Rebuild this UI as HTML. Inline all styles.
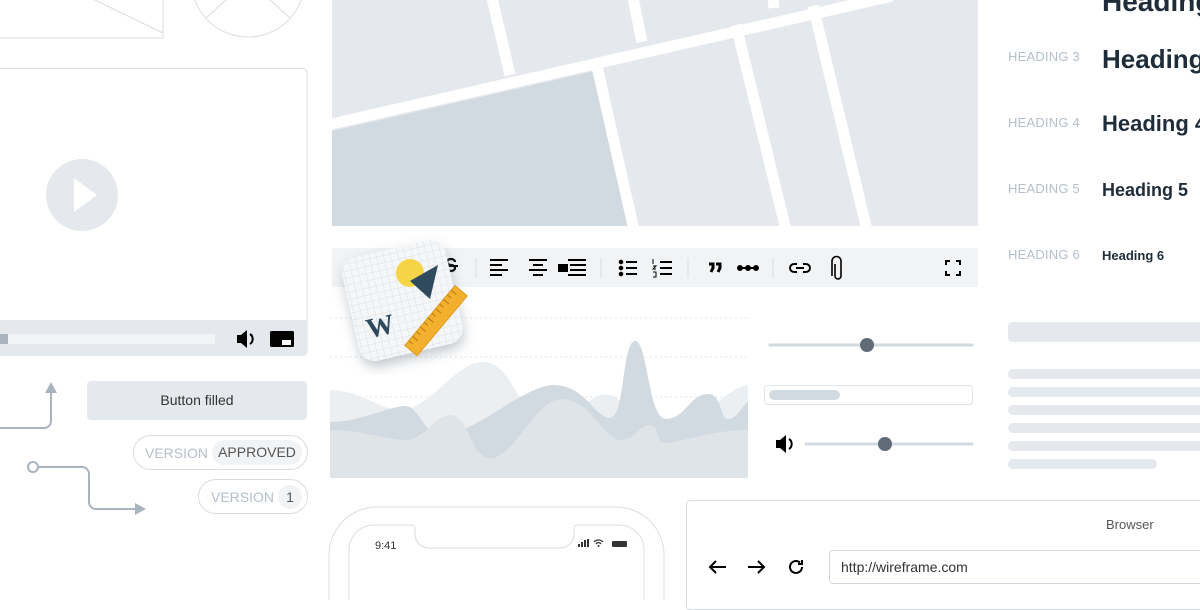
<!DOCTYPE html>
<html><head><meta charset="utf-8"><style>
*{margin:0;padding:0;box-sizing:border-box}
body{width:1200px;height:600px;overflow:hidden;background:#fff;font-family:"Liberation Sans",Arial,sans-serif;position:relative}
.a{position:absolute}
.lbl{position:absolute;left:1008px;font-size:13px;color:#b5bfca;letter-spacing:0.2px}
.h{position:absolute;left:1102px;font-weight:bold;color:#1f2d3a;white-space:nowrap}
.ln{position:absolute;left:1008px;width:200px;height:10px;border-radius:5px;background:#e5e8ec}
</style></head><body>

<svg class="a" style="left:0;top:0" width="330" height="600">
  <path d="M0 38 H163 V0" fill="none" stroke="#d8dde3" stroke-width="1"/>
  <line x1="95" y1="0" x2="163" y2="33" stroke="#d8dde3"/>
  <circle cx="248" cy="-20" r="57" fill="none" stroke="#d8dde3"/>
  <line x1="248" y1="-20" x2="206" y2="18" stroke="#d8dde3"/>
  <line x1="248" y1="-20" x2="290" y2="18" stroke="#d8dde3"/>
  <rect x="-10" y="68.5" width="317" height="287" rx="4" fill="#fff" stroke="#d8dde3"/>
  <path d="M-10 320 H307 V352 a4 4 0 0 1 -4 4 H-10Z" fill="#e5e8ec"/>
  <rect x="0" y="334" width="215" height="10" fill="#f1f3f5"/>
  <rect x="0" y="334" width="8" height="10" fill="#a9b4bf"/>
  <path d="M237 335 h4 l6 -5 v18 l-6 -5 h-4z" fill="#000"/>
  <path d="M250 334 a6 6 0 0 1 0 10" fill="none" stroke="#000" stroke-width="2"/>
  <rect x="270" y="331" width="24" height="16" rx="1.5" fill="#000"/>
  <rect x="282" y="340" width="9" height="5" fill="#fff"/>
  <circle cx="82" cy="195" r="36" fill="#e5e8ec"/>
  <path d="M74 178 L97 195 L74 212Z" fill="#fff"/>
  <path d="M0 428 H44 a7 7 0 0 0 7 -7 V392" fill="none" stroke="#a9b4bf" stroke-width="2"/>
  <path d="M45 393 L51 382 L57 393Z" fill="#a9b4bf"/>
  <circle cx="33" cy="467" r="5" fill="#fff" stroke="#a9b4bf" stroke-width="2"/>
  <path d="M38 467 H82 a7 7 0 0 1 7 7 V502 a7 7 0 0 0 7 7 H136" fill="none" stroke="#a9b4bf" stroke-width="2"/>
  <path d="M135 503 L146 509 L135 515Z" fill="#a9b4bf"/>
</svg>

<div class="a" style="left:87px;top:381px;width:220px;height:39px;background:#e5e8ec;border-radius:4px;font-size:14px;color:#333;text-align:center;line-height:39px">Button filled</div>
<div class="a" style="left:133px;top:435px;width:175px;height:35px;border:1px solid #d8dde3;border-radius:18px"></div>
<div class="a" style="left:145px;top:445px;font-size:14px;color:#b5bfca">VERSION</div>
<div class="a" style="left:212px;top:440px;width:90px;height:25px;border-radius:13px;background:#f1f3f5;font-size:14px;color:#555;text-align:center;line-height:25px">APPROVED</div>
<div class="a" style="left:198px;top:479px;width:110px;height:35px;border:1px solid #d8dde3;border-radius:18px"></div>
<div class="a" style="left:211px;top:489px;font-size:14px;color:#b5bfca">VERSION</div>
<div class="a" style="left:278px;top:485px;width:24px;height:24px;border-radius:12px;background:#f1f3f5;font-size:14px;color:#555;text-align:center;line-height:24px">1</div>

<svg class="a" style="left:332px;top:0" width="646" height="226">
  <rect width="646" height="226" fill="#e5e8ec"/>
  <path d="M0 131 L263 71 L298 226 L0 226Z" fill="#d1d9e1"/>
  <g stroke="#fff" stroke-width="11">
    <line x1="-5" y1="125" x2="560" y2="-4"/>
    <line x1="160" y1="-2" x2="178" y2="75"/>
    <line x1="301" y1="-2" x2="310" y2="42"/>
    <line x1="441" y1="-2" x2="442" y2="8"/>
    <line x1="264" y1="62" x2="302" y2="230"/>
    <line x1="404" y1="25" x2="454" y2="230"/>
    <line x1="481" y1="6" x2="535" y2="230"/>
  </g>
</svg>

<div class="a" style="left:332px;top:248px;width:646px;height:39px;background:#f1f3f5"></div>
<svg class="a" style="left:330px;top:248px" width="650" height="40" fill="none" stroke="#000" stroke-width="2">
  <path d="M125 14 a4 3 0 1 0 -4 3 a4 3 0 1 1 -4 3" stroke-width="2.2"/>
  <path d="M114 18H128" stroke-width="2"/>
  <line x1="146" y1="10" x2="146" y2="30" stroke="#ddd" stroke-width="1"/>
  <path d="M160 12h18M160 17h12M160 22h18M160 27h12"/>
  <path d="M199 12h18M203 17h10M199 22h18M203 27h10"/>
  <rect x="228" y="16" width="10" height="8" fill="#000" stroke="none"/>
  <path d="M238 12h18M240 17h16M240 22h16M238 27h18"/>
  <line x1="271" y1="10" x2="271" y2="30" stroke="#ddd" stroke-width="1"/>
  <path d="M296 14h11M296 20h11M296 26h11"/>
  <circle cx="291" cy="14" r="1.3" fill="#000"/><circle cx="291" cy="20" r="1.3" fill="#000"/><circle cx="291" cy="26" r="1.3" fill="#000"/>
  <path d="M330 14h12M330 20h12M330 26h12"/>
  <path d="M323 11v5M323 18h3l-3 3h3M323 24h3v5h-3" stroke-width="1"/>
  <line x1="358" y1="10" x2="358" y2="30" stroke="#ddd" stroke-width="1"/>
  <path d="M379 16h4v4l-2 4M386 16h4v4l-2 4" stroke-width="3"/>
  <path d="M408 20h20"/><circle cx="410" cy="20" r="2" fill="#000"/><circle cx="418" cy="20" r="2" fill="#000"/><circle cx="426" cy="20" r="2" fill="#000"/>
  <line x1="443" y1="10" x2="443" y2="30" stroke="#ddd" stroke-width="1"/>
  <path d="M467 16h-3a4 4 0 0 0 0 8h3M473 16h3a4 4 0 0 1 0 8h-3M466 20h8"/>
  <path d="M505 16v12a3 3 0 0 0 6 0V13a4.5 4.5 0 0 0 -9 0v15" stroke-width="1.6"/>
  <path d="M616 17v-4h4M626 13h4v4M630 23v4h-4M620 27h-4v-4"/>
</svg>

<svg class="a" style="left:330px;top:290px" width="418" height="188">
  <g stroke="#dfe3e8" stroke-dasharray="2 3"><line x1="0" y1="28" x2="418" y2="28"/><line x1="0" y1="67" x2="418" y2="67"/><line x1="0" y1="107" x2="418" y2="107"/></g>
  <path d="M0 100 C30 100 50 120 70 120 C100 120 125 72 153 72 C185 72 185 128 220 128 C250 128 260 100 280 105 C300 110 300 140 330 140 C370 140 390 100 418 95 V188 H0Z" fill="#eceff2"/>
  <path d="M0 132 C30 132 60 116 75 116 C90 116 95 150 115 145 C150 140 195 95 224 95 C255 95 265 128 280 128 C295 128 292 51 305 51 C318 51 318 129 336 129 C355 129 360 104 378 104 C392 104 390 129 398 129 C408 129 412 115 418 112 V188 H0Z" fill="#d1d9e1"/>
  <path d="M0 140 C30 140 60 150 75 150 C95 150 105 125 120 125 C140 125 140 168 160 168 C185 168 205 109 232 109 C260 109 275 150 290 150 C305 150 310 135 320 135 C330 135 325 153 335 153 C350 153 380 140 418 140 V188 H0Z" fill="#dfe4e9"/>
</svg>

<svg class="a" style="left:760px;top:330px" width="220" height="130">
  <line x1="10" y1="15" x2="212" y2="15" stroke="#d1d9e1" stroke-width="3" stroke-linecap="round"/>
  <circle cx="107" cy="15" r="7" fill="#5f6b76"/>
  <rect x="4.5" y="55.5" width="208" height="19" rx="3" fill="#fff" stroke="#e1e5ea"/>
  <rect x="9" y="60" width="71" height="10" rx="5" fill="#d1d9e1"/>
  <path d="M16 110h4l6 -5v18l-6 -5h-4z" fill="#000"/>
  <path d="M29 109a6 6 0 0 1 0 10" fill="none" stroke="#000" stroke-width="2"/>
  <line x1="46" y1="114" x2="212" y2="114" stroke="#d1d9e1" stroke-width="3" stroke-linecap="round"/>
  <circle cx="125" cy="114" r="7" fill="#5f6b76"/>
</svg>

<svg class="a" style="left:330px;top:225px" width="160" height="150">
  <defs><pattern id="g" width="7" height="7" patternUnits="userSpaceOnUse"><path d="M7 0V7H0" fill="none" stroke="#dde2e7" stroke-width="1"/></pattern>
  <filter id="s" x="-30%" y="-30%" width="160%" height="160%"><feDropShadow dx="0" dy="6" stdDeviation="6" flood-color="#7a8896" flood-opacity="0.45"/></filter></defs>
  <g transform="rotate(-13 70 70)">
    <rect x="18" y="23" width="106" height="106" rx="16" fill="#f5f6f8" filter="url(#s)"/>
    <rect x="18" y="23" width="106" height="106" rx="16" fill="url(#g)"/>
  </g>
  <circle cx="80" cy="48" r="14" fill="#f5d547"/>
  <path d="M80 56 L108 40 L100 74Z" fill="#2e4a5c"/>
  <text x="36" y="110" font-family="Liberation Serif,serif" font-weight="bold" font-size="28" fill="#2e4a5c" transform="rotate(-13 52 100)">W</text>
  <g transform="rotate(-50 105 100)"><rect x="70" y="90" width="78" height="16" fill="#f3b02e" stroke="#e09a1a"/>
  <path d="M76 90v5M82 90v7M88 90v5M94 90v7M100 90v5M106 90v7M112 90v5M118 90v7M124 90v5M130 90v7M136 90v5M142 90v7" stroke="#b57a10" stroke-width="1"/></g>
</svg>

<div class="h" style="top:-14px;font-size:28px">Heading 2</div>
<div class="lbl" style="top:49px">HEADING 3</div><div class="h" style="top:44px;font-size:26px">Heading 3</div>
<div class="lbl" style="top:115px">HEADING 4</div><div class="h" style="top:111px;font-size:22px">Heading 4</div>
<div class="lbl" style="top:181px">HEADING 5</div><div class="h" style="top:180px;font-size:18px">Heading 5</div>
<div class="lbl" style="top:247px">HEADING 6</div><div class="h" style="top:248px;font-size:13px">Heading 6</div>
<div class="a" style="left:1008px;top:322px;width:200px;height:20px;border-radius:4px;background:#e5e8ec"></div>
<div class="ln" style="top:369px"></div><div class="ln" style="top:387px"></div><div class="ln" style="top:405px"></div><div class="ln" style="top:423px"></div><div class="ln" style="top:441px"></div>
<div class="ln" style="top:459px;width:149px"></div>

<svg class="a" style="left:320px;top:500px" width="360" height="100">
  <path d="M9 100 V55 a48 48 0 0 1 48 -48 H296 a48 48 0 0 1 48 48 V100" fill="none" stroke="#d8dde3"/>
  <path d="M29 100 V50 a25 25 0 0 1 25 -25 H92 a3 3 0 0 1 3 3 V34 a14 14 0 0 0 14 14 H240 a14 14 0 0 0 14 -14 V28 a3 3 0 0 1 3 -3 H299 a25 25 0 0 1 25 25 V100" fill="none" stroke="#d8dde3"/>
  <text x="55" y="49" font-size="11" fill="#333" font-family="Liberation Sans,sans-serif">9:41</text>
  <rect x="258" y="44" width="2" height="3" fill="#333"/><rect x="261" y="42" width="2" height="5" fill="#333"/><rect x="264" y="40" width="2" height="7" fill="#333"/><rect x="267" y="39" width="2" height="8" fill="#333"/>
  <path d="M274 42a6 6 0 0 1 9 0M276 44a3 3 0 0 1 5 0" fill="none" stroke="#333" stroke-width="1.3"/><circle cx="278.5" cy="46" r="1" fill="#333"/>
  <rect x="292" y="41" width="15" height="6" rx="1" fill="#333"/>
</svg>

<div class="a" style="left:686px;top:500px;width:530px;height:110px;border:1px solid #d8dde3;border-radius:4px"></div>
<div class="a" style="left:1106px;top:517px;font-size:13px;color:#555">Browser</div>
<svg class="a" style="left:706px;top:555px" width="110" height="25" fill="none" stroke="#000" stroke-width="2">
  <path d="M20 12H4M10 6L4 12l6 6"/>
  <path d="M42 12h16M52 6l6 6-6 6"/>
  <path d="M96 12a6 6 0 1 1 -2 -4.5"/><path d="M96 5v4h-4" stroke-width="2"/>
</svg>
<div class="a" style="left:829px;top:550px;width:380px;height:34px;border:1px solid #d1d7de;border-radius:4px;font-size:14px;color:#333;line-height:32px;padding-left:11px">http://wireframe.com</div>

</body></html>
